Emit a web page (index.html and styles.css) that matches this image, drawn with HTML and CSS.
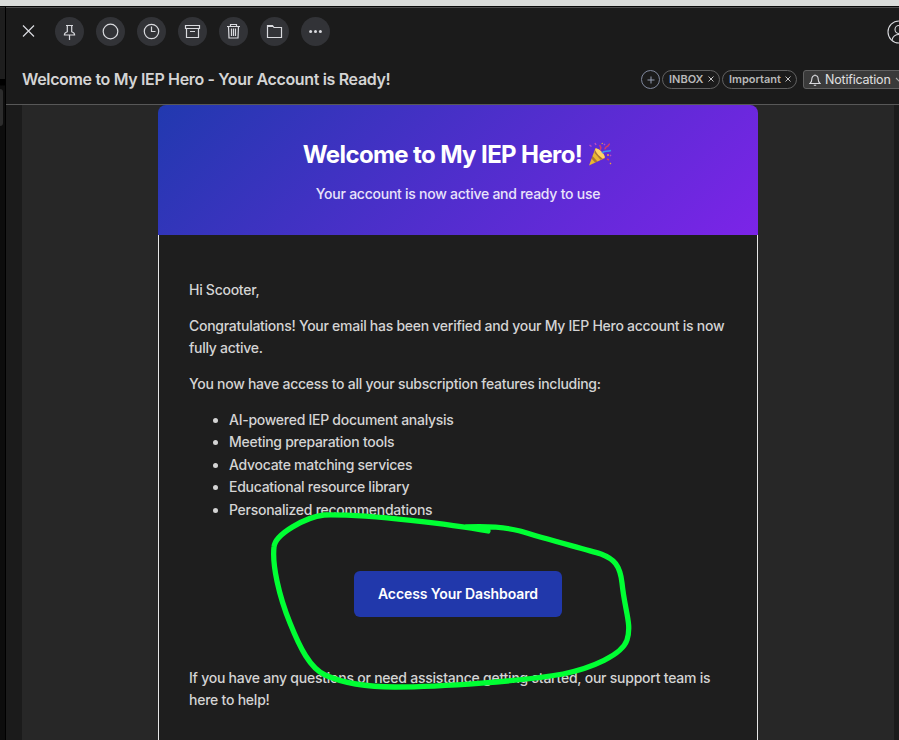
FILE: index.html
```html
<!DOCTYPE html>
<html lang="en">
<head>
<meta charset="utf-8">
<title>Mail</title>
<link rel="stylesheet" href="styles.css">
</head>
<body>
<div class="window-edge"></div>
<div class="app">
  <aside class="list-edge"><div class="list-top"></div><div class="list-item"></div></aside>
  <main class="reader">
    <header class="top">
      <div class="toolbar">
        <button class="close" aria-label="Close"><svg width="13" height="13" viewBox="0 0 13 13"><path d="M1 .5l11 11M12 .5L1 11.500"/></svg></button>
        <button class="tool" aria-label="Pin"><svg width="29" height="29" viewBox="0 0 29 29"><path d="M11 8.500h7M12.300 8.500v6.200c-1.800.6-2.900 1.500-2.900 3.300h10.200c0-1.800-1.100-2.700-2.900-3.300V8.500M14.500 18v5"/></svg></button>
        <button class="tool" aria-label="Mark unread"><svg width="29" height="29" viewBox="0 0 29 29"><circle cx="14.500" cy="14.500" r="7.300"/></svg></button>
        <button class="tool" aria-label="Snooze"><svg width="29" height="29" viewBox="0 0 29 29"><circle cx="14.500" cy="14.500" r="7.200"/><path d="M14.500 9.500v5h4"/></svg></button>
        <button class="tool" aria-label="Archive"><svg width="29" height="29" viewBox="0 0 29 29"><path d="M7.500 8.500h14v3h-14zM8.500 11.500v9h12v-9M12 14.500h5"/></svg></button>
        <button class="tool" aria-label="Delete"><svg width="29" height="29" viewBox="0 0 29 29"><path d="M8 9.500h13M11.500 9.500v-2h6v2M9.500 9.500l.5 11.500h9l.5-11.500M12.500 11.500v7.500M14.500 11.500v7.500M16.500 11.500v7.500"/></svg></button>
        <button class="tool" aria-label="Move"><svg width="29" height="29" viewBox="0 0 29 29"><path d="M7.500 20.500v-12h5l1.500 2h7.500v10zM7.500 9.500h5.500"/></svg></button>
        <button class="tool" aria-label="More"><svg width="29" height="29" viewBox="0 0 29 29"><g class="dots"><circle cx="9.600" cy="14.500" r="1.500"/><circle cx="14.500" cy="14.500" r="1.500"/><circle cx="19.400" cy="14.500" r="1.500"/></g></svg></button>
        <svg class="account" width="24" height="24" viewBox="0 0 24 24"><circle cx="12" cy="12" r="11"/><circle cx="12" cy="9.500" r="4"/><path d="M5 20c1-4 3.500-5.500 7-5.500s6 1.500 7 5.500"/></svg>
      </div>
      <div class="subject-row">
        <h2 class="subject">Welcome to My IEP Hero - Your Account is Ready!</h2>
        <div class="labels">
          <span class="add"><svg width="8" height="8" viewBox="0 0 8 8"><path d="M4 .5v7M.5 4h7"/></svg></span>
          <span class="label inbox"><span>INBOX</span><svg width="6" height="6" viewBox="0 0 6 6"><path d="M.5.5l5 5M5.500.5l-5 5"/></svg></span>
          <span class="label important"><span>Important</span><svg width="6" height="6" viewBox="0 0 6 6"><path d="M.5.5l5 5M5.500.5l-5 5"/></svg></span>
          <span class="notify"><svg width="12" height="12" viewBox="0 0 12 12"><path d="M1 9.500h10c-1.300-1-1.800-2-1.800-4.200C9.200 3 8 1.500 6 1.500S2.800 3 2.800 5.300C2.800 7.500 2.300 8.500 1 9.500zM4.800 11.300h2.400M6 .5v1"/></svg><span>Notification</span><svg class="chev" width="8" height="6" viewBox="0 0 8 6"><path d="M1 1l3 3 3-3"/></svg></span>
        </div>
      </div>
    </header>
    <section class="panel">
      <article class="email">
        <div class="hero">
          <h1><span>Welcome to My IEP Hero!</span><svg class="party" width="26" height="26" viewBox="0 0 26 26"><path fill="#e9b632" d="M2 24.500L8.500 7c4 1.500 8 5.500 9.500 10z"/><path fill="#8c5536" d="M5.500 15l5 5.500-2.500 1-3.500-4zM8 9l7.500 9-2 .7-6-7z" opacity=".65"/><ellipse cx="13" cy="12.300" rx="6.300" ry="2.300" transform="rotate(46 13 12.300)" fill="#ffd465"/><path fill="none" stroke="#d13d68" stroke-width="1.500" d="M13 9c1.500-2 .5-4-.5-5M23 3c-2 0-1 2-3 2.500s-1 2-2.500 2.500M20 18l2 1"/><path fill="none" stroke="#3d98ef" stroke-width="1.600" d="M15 12c2-2.500 5-1 9-2.500"/><path fill="none" stroke="#b94bc7" stroke-width="1.500" d="M2.500 4l2 1.500M8 2l1 2M17 3l1 1M23 14l1 1"/><path fill="none" stroke="#e7a13d" stroke-width="1.300" d="M20 14h2M23 22l1 1M15 2l.5 1"/></svg></h1>
          <p class="tagline">Your account is now active and ready to use</p>
        </div>
        <div class="body">
          <p>Hi Scooter,</p>
          <p>Congratulations! Your email has been verified and your My IEP Hero account is now<br>fully active.</p>
          <p>You now have access to all your subscription features including:</p>
          <ul>
            <li>AI-powered IEP document analysis</li>
            <li>Meeting preparation tools</li>
            <li>Advocate matching services</li>
            <li>Educational resource library</li>
            <li>Personalized recommendations</li>
          </ul>
          <div class="action"><a class="cta">Access Your Dashboard</a></div>
          <p class="support">If you have any questions or need assistance getting started, our support team is<br>here to help!</p>
        </div>
      </article>
    </section>
  </main>
</div>
<svg class="marker" width="899" height="740" viewBox="0 0 899 740"><path d="M488 531C455 525 370 514 324 515C306 517 275 534 274 547C272 565 279 596 290 623C300 648 310 668 325 675C345 684 369 687 395 687C440 687 525 681 563 674C592 668 622 655 627 640C632 624 625 612 622 583C620 565 614 559 601 554C585 549 549 540 520 531C505 527 490 526 466 527"/></svg>
</body>
</html>
```
FILE: styles.css
```css
* { box-sizing: border-box; }
body {
  margin: 0;
  width: 899px;
  height: 740px;
  overflow: hidden;
  display: flex;
  flex-direction: column;
  background: #1b1b1b;
  color: #d4d4d4;
  font-family: Inter, "Liberation Sans", sans-serif;
  font-size: 14px;
}
svg { fill: none; stroke: #d9dade; stroke-width: 1.1; flex: none; display: block; }
button { border: 0; padding: 0; background: none; display: flex; align-items: center; justify-content: center; flex: none; }
.window-edge { height: 7px; flex: none; background: #dadcda; border-bottom: 1px solid #080808; }
.app { flex: 1; min-height: 0; display: flex; }
.list-edge { width: 6px; flex: none; background: linear-gradient(#000 78px, #0d0d0d 79px); border-right: 1px solid #000; }
.list-top { height: 72px; background: #1e1e1e; border-top: 1px solid #333; }
.list-item { height: 37px; width: 3px; margin-top: 10px; background: #2c2c2c; border-radius: 0 3px 3px 0; }
.reader { flex: 1; min-width: 0; display: flex; flex-direction: column; border-top: 1px solid #4c4c4c; }
.top { height: 97px; flex: none; border-bottom: 1px solid #585858; padding-left: 16px; overflow: hidden; }
.toolbar { display: flex; align-items: center; gap: 12px; height: 47px; }
.close { width: 13px; margin-right: 8px; }
.close svg { stroke-width: 1.2; }
.tool { width: 29px; height: 29px; border-radius: 50%; background: #323337; }
.tool svg { stroke-width: 1.2; }
.dots { fill: #d9dade; stroke: none; }
.account { margin-left: 545px; }
.subject-row { display: flex; align-items: center; height: 49px; white-space: nowrap; }
.subject { margin: -2px 0 0; width: 619px; flex: none; font-size: 16px; font-weight: 600; line-height: 20px; letter-spacing: -.34px; }
.labels { display: flex; align-items: center; gap: 2px; flex: none; }
.add { width: 19px; height: 19px; border: 1px solid #7f879c; border-radius: 50%; display: flex; align-items: center; justify-content: center; }
.add svg { stroke: #949db2; stroke-width: 1; }
.label { height: 19px; border: 1px solid #606060; border-radius: 10px; padding: 0 5px 0 6px; display: flex; align-items: center; justify-content: space-between; font-size: 11px; line-height: 15px; font-weight: 600; color: #b9b9b9; }
.label > span { margin-top: -1px; }
.label svg { stroke: #c2c2c2; stroke-width: 1; margin-top: -1px; }
.inbox { width: 58px; }
.important { width: 75px; }
.notify { height: 19px; width: 110px; margin-left: 4px; padding-left: 5px; border: 1px solid #606060; border-radius: 3px; background: #3a3a3a; display: flex; align-items: center; gap: 4px; font-size: 12.500px; letter-spacing: -.2px; color: #e0e0e0; }
.notify .chev { stroke: #aaa; }
.panel { flex: 1; min-height: 0; overflow: hidden; margin: 0 5px 0 16px; padding-left: 136px; background: #272727; }
.email { width: 600px; height: 100%; display: flex; flex-direction: column; letter-spacing: -.27px; font-weight: 450; }
.hero { height: 130px; flex: none; padding-top: 30px; border-radius: 8px 8px 0 0; background: linear-gradient(135deg, #2139af, #7c24e8); color: #fff; text-align: center; }
.hero h1 { margin: 0; height: 38px; display: flex; align-items: center; justify-content: center; gap: 5px; font-size: 24px; font-weight: 700; letter-spacing: -.62px; }
.party { stroke: none; }
.tagline { margin: 10px 0 0; line-height: 22px; letter-spacing: -.25px; color: #e9e3fa; }
.body { flex: 1; padding: 30px; border: solid #e7e7e7; border-width: 0 1px; background: #1e1e1e; white-space: nowrap; }
.body p { margin: 14px 0; line-height: 22px; }
.body ul { margin: 14px 0 0; padding-left: 40px; line-height: 22.400px; }
.action { display: flex; justify-content: center; padding: 50px 0 36px; }
.cta { width: 208px; height: 46px; line-height: 46px; border-radius: 6px; background: #2138ab; color: #fff; text-align: center; font-weight: 600; letter-spacing: -.1px; }
.body .support { letter-spacing: -.235px; }
.marker { position: absolute; left: 0; top: 0; stroke: #00ff33; stroke-width: 5.3; stroke-linecap: round; stroke-linejoin: round; pointer-events: none; }
```
